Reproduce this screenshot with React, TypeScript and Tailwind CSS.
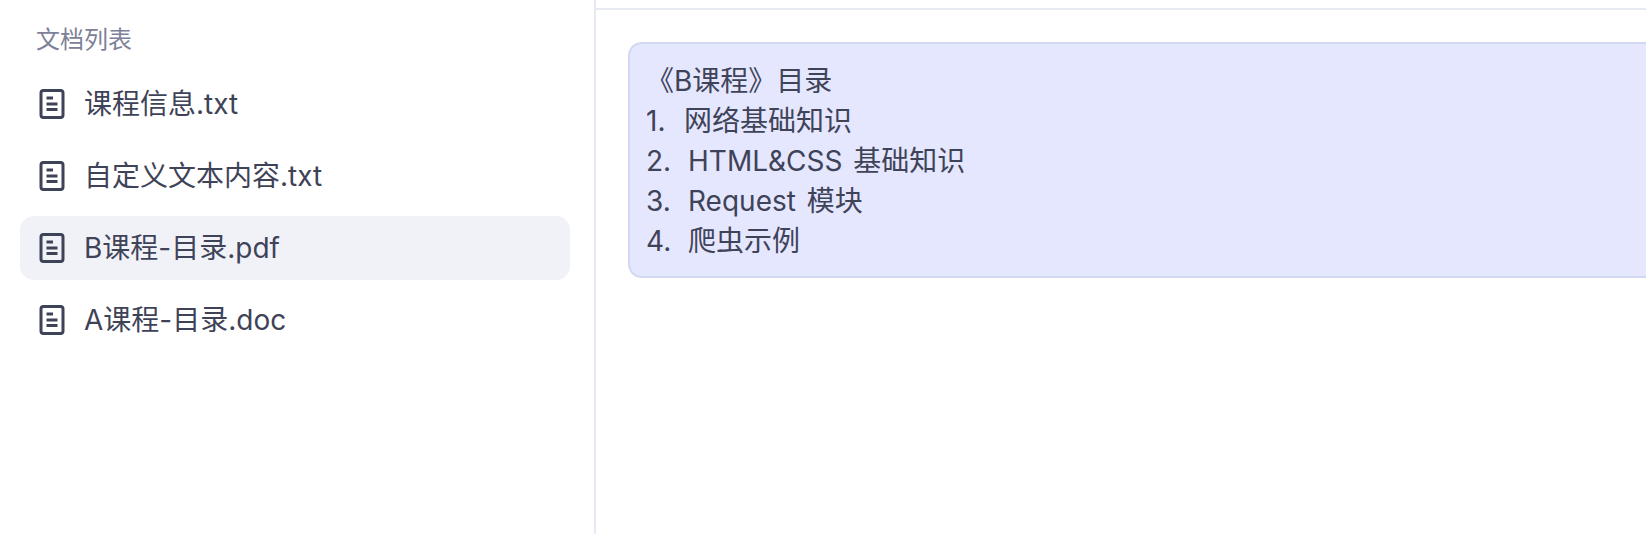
const font = { fontFamily: '"Inter", "Noto Sans CJK SC", sans-serif' };

const files = ["课程信息.txt", "自定义文本内容.txt", "B课程-目录.pdf", "A课程-目录.doc"];
const activeFile = "B课程-目录.pdf";

function DocIcon() {
  return (
    <svg width="26" height="30" viewBox="0 0 26 30" fill="none" className="shrink-0">
      <rect x="2" y="1.5" width="22" height="27" rx="2.5" stroke="#3f4358" strokeWidth="3" />
      <path d="M7.5 9h6.5M7.5 15h11M7.5 20.5h11" stroke="#3f4358" strokeWidth="3" />
    </svg>
  );
}

export default function App() {
  return (
    <div
      className="flex h-[534px] w-[1646px] overflow-hidden bg-white text-[28px] leading-[40px] text-[#3f4358]"
      style={font}
    >
      <aside className="flex w-[596px] shrink-0 flex-col border-r-2 border-[#e7e9f2] pl-5 pr-[24px]">
        <div className="mt-[21px] mb-[13px] pl-[16px] text-[24px] leading-[38px] text-[#7d8197]">文档列表</div>
        <ul className="flex flex-col gap-2">
          {files.map((name) => (
            <li
              key={name}
              className={`flex h-16 items-center gap-[19px] rounded-[14px] pl-[19px] ${
                name === activeFile ? "bg-[#f1f2f8]" : ""
              }`}
            >
              <DocIcon />
              <span>{name}</span>
            </li>
          ))}
        </ul>
      </aside>

      <main className="min-w-0 flex-1">
        <div className="h-[10px] border-b-2 border-[#e7e9f2]" />
        <div className="pt-8 pl-8">
          <div className="h-[236px] w-[1100px] rounded-l-[14px] border-2 border-r-0 border-[#d0d8f2] bg-[#e5e7ff] pt-[17px] pl-[16px] [word-spacing:3px]">
            <div>《B课程》目录</div>
            <div className="flex">
              <span className="w-[38px]">1.</span>
              <span>网络基础知识</span>
            </div>
            <div className="flex">
              <span className="w-[42px]">2.</span>
              <span>HTML&amp;CSS 基础知识</span>
            </div>
            <div className="flex">
              <span className="w-[42px]">3.</span>
              <span>Request 模块</span>
            </div>
            <div className="flex">
              <span className="w-[42px]">4.</span>
              <span>爬虫示例</span>
            </div>
          </div>
        </div>
      </main>
    </div>
  );
}
